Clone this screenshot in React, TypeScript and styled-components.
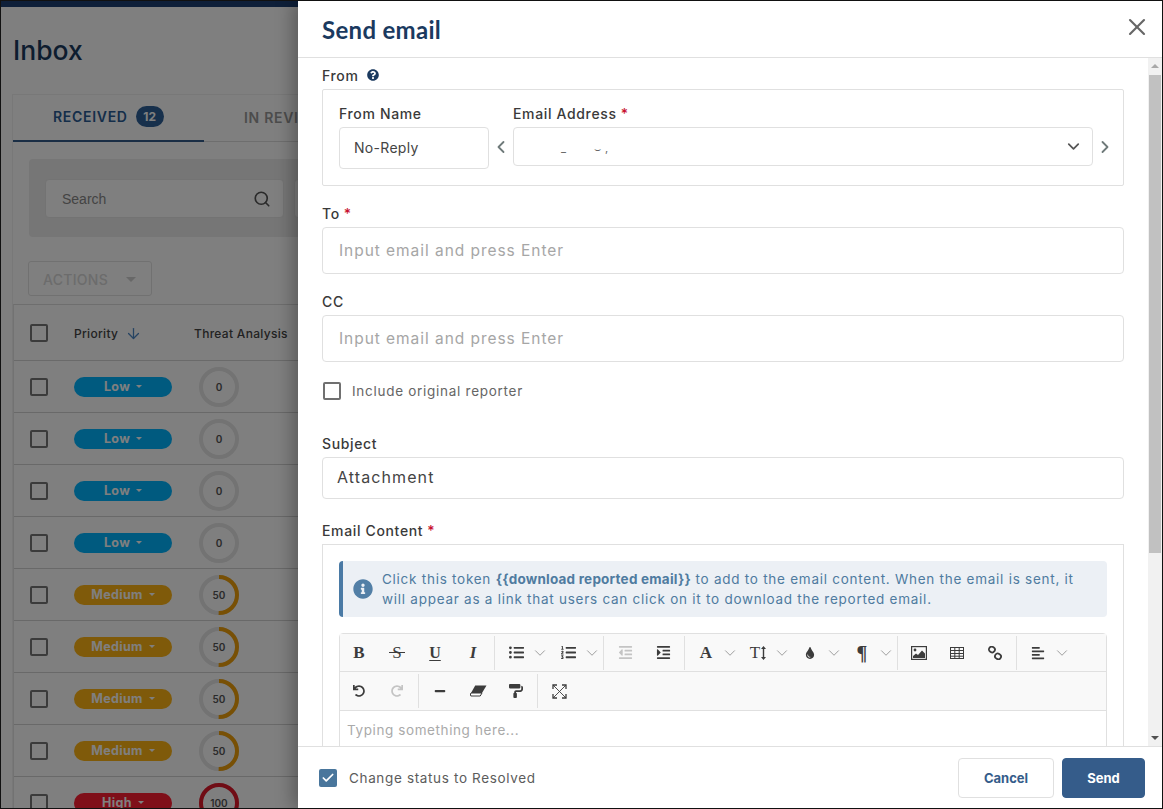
import React from 'react';
import styled, { createGlobalStyle } from 'styled-components';
import { ArrowDown, Check, ChevronDown, ChevronLeft, ChevronRight, Search, X } from 'lucide-react';
import {
  FaAlignLeft, FaIndent, FaInfoCircle, FaListOl, FaListUl, FaMinus, FaOutdent,
  FaPaintRoller, FaQuestionCircle, FaTint, FaUndo,
} from 'react-icons/fa';

const font = `Inter, "Liberation Sans", sans-serif`;
const serif = `"Liberation Serif", serif`;
const navy = '#1b3a5f';
const blue = '#355c8a';

const GlobalStyle = createGlobalStyle`
  html, body { margin: 0; padding: 0; background: #fff; }
  * { box-sizing: border-box; }
  body { font-family: ${font}; color: #333; }
`;

const Screen = styled.div`
  position: relative;
  width: 1163px;
  height: 809px;
  border: 1px solid #111;
  overflow: hidden;
  background: #fff;
`;

/* page behind the drawer */
const Page = styled.div`
  width: 1163px;
  display: flex;
  flex-direction: column;
`;

const TopBar = styled.div`
  height: 6px;
  background: #1d3f73;
`;

const PageBody = styled.div`
  padding: 26px 0 0 11px;
`;

const PageTitle = styled.h1`
  margin: 0 0 27px 1px;
  font-size: 26.5px;
  line-height: 34px;
  font-weight: 500;
  color: ${navy};
`;

const Card = styled.div`
  border: 1px solid #f0f0f0;
  border-right: 0;
  border-bottom: 0;
`;

const Tabs = styled.div`
  display: flex;
  height: 47px;
  border-bottom: 1px solid #ddd;
`;

const Tab = styled.div<{ $active?: boolean }>`
  width: 191px;
  height: 47px;
  display: flex;
  align-items: center;
  gap: 8px;
  padding: 0 0 2px 40px;
  font-size: 14px;
  font-weight: 600;
  letter-spacing: 0.7px;
  color: ${(p) => (p.$active ? '#2b5c94' : '#999')};
  border-bottom: ${(p) => (p.$active ? `2px solid ${blue}` : '0')};
`;

const TabBadge = styled.span`
  width: 28px;
  height: 21px;
  border-radius: 11px;
  background: #2f6199;
  color: #fff;
  font-size: 12px;
  font-weight: 700;
  letter-spacing: 0;
  display: flex;
  align-items: center;
  justify-content: center;
`;

const FilterBar = styled.div`
  display: flex;
  gap: 10px;
  margin: 17px 0 24px 16px;
  padding: 20px 16px 19px;
  background: #ececec;
  border-radius: 4px;
`;

const SearchBox = styled.div`
  width: 239px;
  height: 39px;
  background: #fff;
  border: 1px solid #e6e6e6;
  border-radius: 4px;
  display: flex;
  align-items: center;
  justify-content: space-between;
  padding: 0 12px 0 16px;
  font-family: "Liberation Sans", sans-serif;
  font-size: 14px;
  color: #888;
`;

const ActionsButton = styled.div`
  width: 124px;
  height: 35px;
  margin-left: 15px;
  border: 1px solid #e2e2e2;
  border-radius: 3px;
  display: flex;
  align-items: center;
  gap: 18px;
  padding: 1px 0 0 14px;
  font-size: 14px;
  font-weight: 500;
  letter-spacing: 0.3px;
  color: #d8d8d8;
`;

const Caret = styled.span<{ $size?: number; $color?: string }>`
  width: 0;
  height: 0;
  border-left: ${(p) => p.$size ?? 4}px solid transparent;
  border-right: ${(p) => p.$size ?? 4}px solid transparent;
  border-top: ${(p) => p.$size ?? 4}px solid ${(p) => p.$color ?? '#fff'};
`;

const Table = styled.div`
  margin-top: 8px;
  border-left: 1px solid #e4e4e4;
  border-top: 1px solid #dcdcdc;
`;

const HeaderRow = styled.div`
  height: 56px;
  display: flex;
  align-items: center;
  padding: 1px 0 0 16px;
  border-bottom: 1px solid #d4d4d4;
`;

const Row = styled.div`
  height: 52px;
  display: flex;
  align-items: center;
  padding-left: 16px;
  border-bottom: 1px solid #d2d2d2;
`;

const RowCheck = styled.span`
  width: 18px;
  height: 18px;
  flex: none;
  margin-right: 26px;
  border: 2px solid #777;
  border-radius: 2px;
`;

const HeaderCell = styled.div<{ $width: number }>`
  width: ${(p) => p.$width}px;
  flex: none;
  display: flex;
  align-items: center;
  gap: 7px;
  font-size: 12px;
  font-weight: 500;
  color: #444;
  letter-spacing: 0.3px;
`;

const levelColors = { Low: '#00b4ff', Medium: '#ffb414', High: '#ff1e32' };
type Level = keyof typeof levelColors;

const Pill = styled.span<{ $level: Level }>`
  width: 98px;
  height: 20px;
  flex: none;
  margin-right: 27px;
  border-radius: 10px;
  background: ${(p) => levelColors[p.$level]};
  color: #fff;
  font-size: 12.5px;
  font-weight: 700;
  letter-spacing: 0.35px;
  display: flex;
  align-items: center;
  justify-content: center;
  gap: 6px;
`;

const RingWrap = styled.div`
  width: 40px;
  height: 40px;
  display: grid;
  place-items: center;

  & > * {
    grid-area: 1 / 1;
  }
`;

const RingValue = styled.span`
  font-size: 10px;
  font-weight: 600;
  color: #555;
`;

const Ring = ({ value, color }: { value: number; color: string }) => {
  const circumference = 2 * Math.PI * 18;
  return (
    <RingWrap>
      <svg width="40" height="40" viewBox="0 0 40 40">
        <circle cx="20" cy="20" r="18" fill="none" stroke="#e6e6e6" strokeWidth="4" />
        {value > 0 && (
          <circle
            cx="20"
            cy="20"
            r="18"
            fill="none"
            stroke={color}
            strokeWidth="4"
            strokeDasharray={`${(circumference * value) / 100} ${circumference}`}
            transform="rotate(-90 20 20)"
          />
        )}
      </svg>
      <RingValue>{value}</RingValue>
    </RingWrap>
  );
};

const Overlay = styled.div`
  position: absolute;
  inset: 0;
  background: rgba(0, 0, 0, 0.5);
`;

/* drawer */
const Drawer = styled.div`
  position: absolute;
  top: 0;
  right: 0;
  bottom: 0;
  width: 864px;
  background: #fff;
  display: flex;
  flex-direction: column;
  box-shadow: -6px 0 16px rgba(0, 0, 0, 0.28);
`;

const DrawerHeader = styled.header`
  height: 57px;
  flex: none;
  display: flex;
  align-items: center;
  justify-content: space-between;
  padding: 0 11px 0 24px;
  border-bottom: 1px solid #e0e0e0;
`;

const DrawerTitle = styled.h2`
  margin: 0;
  font-family: Lato, sans-serif;
  font-size: 24px;
  font-weight: 700;
  letter-spacing: 0.3px;
  color: ${navy};
`;

const CloseIcon = styled(X)`
  margin-bottom: 4px;
`;

const DrawerMain = styled.div`
  flex: 1;
  min-height: 0;
  display: flex;
  overflow: hidden;
`;

const Form = styled.div`
  width: 802px;
  margin: 0 24px;
  padding-top: 9px;
  flex: none;
`;

const Label = styled.div<{ $top?: number }>`
  display: flex;
  align-items: center;
  gap: 3px;
  height: 18px;
  padding-bottom: 2px;
  margin-top: ${(p) => p.$top ?? 0}px;
  margin-bottom: 4px;
  font-size: 14px;
  font-weight: 500;
  letter-spacing: 0.65px;
  color: #3a3a3a;
  white-space: nowrap;
`;

const Required = styled.span`
  color: #c8102e;
  margin-left: 1px;
`;

const HelpIcon = styled(FaQuestionCircle)`
  margin-left: 5px;
  color: ${navy};
  font-size: 12px;
`;

const FromBox = styled.div`
  height: 97px;
  border: 1px solid #e0e0e0;
  border-radius: 2px;
  padding: 15px 0 0 16px;
  display: flex;
`;

const FieldColumn = styled.div<{ $width: number }>`
  width: ${(p) => p.$width}px;
  flex: none;
`;

const NavChevron = styled.div`
  width: 24px;
  flex: none;
  height: 39px;
  margin-top: 22px;
  display: flex;
  align-items: center;
  justify-content: center;
  color: #6f7a7a;
`;

const Field = styled.div<{ $height: number; $size?: number; $pad?: number; $spacing?: number; $lift?: boolean }>`
  height: ${(p) => p.$height}px;
  border: 1px solid #e0e0e0;
  border-radius: 4px;
  display: flex;
  align-items: center;
  justify-content: space-between;
  padding: 0 9px ${(p) => (p.$lift ? 2 : 0)}px ${(p) => p.$pad ?? 14}px;
  font-size: ${(p) => p.$size ?? 14}px;
  letter-spacing: ${(p) => p.$spacing ?? 0.3}px;
  color: #444;
`;

const Placeholder = styled.span`
  color: #a6a6a6;
  font-size: 15.5px;
  letter-spacing: 0.95px;
`;

const Redacted = styled.span`
  padding: 3px 0 0 33px;
  font-size: 11px;
  color: #666;
`;

const RedactedGap = styled.span`
  display: inline-block;
  width: 28px;
`;

const CheckRow = styled.label`
  display: flex;
  align-items: center;
  gap: 11px;
  margin: 20px 0 0 1px;
  font-size: 13.5px;
  letter-spacing: 0.72px;
  color: #666;
`;

const EmptyCheck = styled.span`
  width: 18px;
  height: 18px;
  border: 2px solid #707070;
  border-radius: 2px;
`;

const ContentBox = styled.div`
  border: 1px solid #e0e0e0;
  padding: 16px;
`;

const Notice = styled.div`
  height: 56px;
  display: flex;
  align-items: center;
  gap: 9px;
  padding-left: 10px;
  border-left: 4px solid #4a7aa5;
  border-radius: 4px;
  background: #ecf0f5;
  font-size: 13.5px;
  line-height: 20px;
  letter-spacing: 0.74px;
  color: #4f7ba0;
  white-space: nowrap;

  b {
    letter-spacing: 0.22px;
  }
`;

const NoticeIcon = styled(FaInfoCircle)`
  font-size: 20px;
  flex: none;
  color: #527fa6;
`;

const Editor = styled.div`
  margin-top: 16px;
  border: 1px solid #e0e0e0;
  border-radius: 4px 4px 0 0;
`;

const ToolbarRow = styled.div`
  height: 38px;
  display: flex;
  align-items: center;
  background: #f9f9f9;
  border-bottom: 1px solid #e0e0e0;

  & + & {
    height: 39px;
  }
`;

const ToolButton = styled.button<{ $dim?: boolean; $size?: number }>`
  width: 38px;
  height: 36px;
  flex: none;
  padding: 0;
  border: 0;
  background: none;
  display: flex;
  align-items: center;
  justify-content: center;
  font-family: ${serif};
  font-size: ${(p) => p.$size ?? 17}px;
  line-height: 1;
  color: ${(p) => (p.$dim ? '#c4c4c4' : '#3c3c3c')};
`;

const ToolMenu = styled.span`
  width: 10px;
  margin-right: 4px;
  flex: none;
  display: flex;
  align-items: center;
  justify-content: center;
  color: #8a8a8a;

  svg {
    flex: none;
  }
`;

const ToolSep = styled.span`
  width: 1px;
  height: 34px;
  flex: none;
  margin: 0 2px 0 2px;
  background: #e0e0e0;
`;

const EditorText = styled.div`
  min-height: 140px;
  padding: 11px 7px;
  font-size: 13.5px;
  letter-spacing: 0.6px;
  color: #aaa;
`;

const Strike = styled.span`
  position: relative;
  font-size: 17px;

  &::after {
    content: '';
    position: absolute;
    left: -3px;
    right: -3px;
    top: 8px;
    height: 1px;
    background: #3c3c3c;
  }
`;

const Under = styled.span`
  font-weight: 700;
  text-decoration: underline;
  text-underline-offset: 2px;
  font-size: 16px;
`;

const ScrollTrack = styled.div`
  width: 14px;
  flex: none;
  background: #f1f1f1;
  display: flex;
  flex-direction: column;
  align-items: center;
`;

const ScrollArrow = styled.div<{ $up?: boolean }>`
  height: 17px;
  flex: none;
  display: flex;
  align-items: center;
  justify-content: center;
  transform: ${(p) => (p.$up ? 'rotate(180deg)' : 'none')};
`;

const ScrollThumb = styled.div`
  width: 12px;
  height: 478px;
  background: #c1c1c1;
`;

const ScrollRest = styled.div`
  flex: 1;
`;

const Footer = styled.footer`
  height: 62px;
  flex: none;
  display: flex;
  align-items: center;
  justify-content: space-between;
  padding: 0 17px 0 21px;
  border-top: 1px solid #e0e0e0;
`;

const FooterCheck = styled.label`
  display: flex;
  align-items: center;
  gap: 12px;
  font-size: 13.5px;
  letter-spacing: 0.65px;
  color: #5c5c5c;
`;

const CheckedBox = styled.span`
  width: 18px;
  height: 18px;
  border-radius: 2px;
  background: #49769c;
  display: flex;
  align-items: center;
  justify-content: center;
  color: #fff;
`;

const FooterButtons = styled.div`
  display: flex;
  gap: 8px;
`;

const FooterButton = styled.button<{ $primary?: boolean }>`
  height: 40px;
  width: ${(p) => (p.$primary ? '83px' : '96px')};
  border-radius: 4px;
  border: 1px solid ${(p) => (p.$primary ? blue : '#e0e0e0')};
  background: ${(p) => (p.$primary ? blue : '#fff')};
  color: ${(p) => (p.$primary ? '#fff' : blue)};
  font-family: ${font};
  font-size: 13px;
  font-weight: 700;
`;

const TextT = styled.span`
  font-size: 17px;
  margin-right: 1px;
`;

const TextHeightIcon = () => (
  <>
    <TextT>T</TextT>
    <svg width="5" height="14" viewBox="0 0 5 14" fill="#3c3c3c">
      <path d="M2.5 0 5 3H3.2v8H5l-2.5 3L0 11h1.8V3H0z" />
    </svg>
  </>
);

const ImageIcon = () => (
  <svg width="16" height="14" viewBox="0 0 16 14">
    <rect x="0.6" y="0.6" width="14.8" height="12.8" fill="none" stroke="#3c3c3c" strokeWidth="1.2" />
    <circle cx="4" cy="4" r="1.4" fill="#3c3c3c" />
    <path d="M2 12V10l3-2.5 2 1.5 4-4.5 3 3V12z" fill="#3c3c3c" />
  </svg>
);

const TableIcon = () => (
  <svg width="14" height="12" viewBox="0 0 14 12" fill="none" stroke="#3c3c3c" strokeWidth="1">
    <rect x="0.5" y="0.5" width="13" height="11" />
    <path d="M0 3.5h14M0 6.5h14M0 9.2h14M4.8 0v12M9.2 0v12" />
  </svg>
);

const LinkIcon = () => (
  <svg width="14" height="14" viewBox="0 0 14 14" fill="none" stroke="#3c3c3c" strokeWidth="1.8">
    <rect x="0.9" y="0.9" width="6" height="5.4" rx="2.6" transform="rotate(35 4 3.6)" />
    <rect x="7" y="7.7" width="6" height="5.4" rx="2.6" transform="rotate(35 10 10.4)" />
  </svg>
);

const EraserIcon = () => (
  <svg width="17" height="12" viewBox="0 0 17 12">
    <path d="M5.2 .5H16.5L12 8H1z" fill="#3c3c3c" />
    <path d="M1 8h11l-1.8 3H.8L.4 9z" fill="#fff" stroke="#3c3c3c" strokeWidth="1" />
  </svg>
);

const ExpandIcon = () => (
  <svg width="15" height="15" viewBox="0 0 15 15" fill="none" stroke="#3c3c3c" strokeWidth="0.9">
    <path d="M1 1l13 13M14 1 1 14" />
    <path d="M1 5V1h4M10 1h4v4M14 10v4h-4M5 14H1v-4" strokeWidth="1.3" />
  </svg>
);

const levels: Level[] = ['Low', 'Low', 'Low', 'Low', 'Medium', 'Medium', 'Medium', 'Medium', 'High'];
const scores: Record<Level, number> = { Low: 0, Medium: 50, High: 100 };
const ringColors: Record<Level, string> = { Low: '#e6e6e6', Medium: '#f0a00a', High: '#e0182a' };

const smallChevron = <ChevronDown size={18} strokeWidth={1.1} />;

export default function App() {
  return (
    <Screen>
      <GlobalStyle />
      <Page>
        <TopBar />
        <PageBody>
          <PageTitle>Inbox</PageTitle>
          <Card>
            <Tabs>
              <Tab $active>
                RECEIVED <TabBadge>12</TabBadge>
              </Tab>
              <Tab>IN REVIEW</Tab>
            </Tabs>
            <FilterBar>
              <SearchBox>
                Search
                <Search size={18} color="#555" strokeWidth={2.2} />
              </SearchBox>
              <SearchBox />
            </FilterBar>
            <ActionsButton>
              ACTIONS <Caret $size={5} $color="#d0d0d0" />
            </ActionsButton>
            <Table>
              <HeaderRow>
                <RowCheck />
                <HeaderCell $width={120}>
                  Priority <ArrowDown size={17} color="#4a86c5" strokeWidth={1.8} />
                </HeaderCell>
                <HeaderCell $width={120}>Threat Analysis</HeaderCell>
              </HeaderRow>
              {levels.map((level, i) => (
                <Row key={i}>
                  <RowCheck />
                  <Pill $level={level}>
                    {level} <Caret $size={3} />
                  </Pill>
                  <Ring value={scores[level]} color={ringColors[level]} />
                </Row>
              ))}
            </Table>
          </Card>
        </PageBody>
      </Page>
      <Overlay />
      <Drawer>
        <DrawerHeader>
          <DrawerTitle>Send email</DrawerTitle>
          <CloseIcon size={28} color="#666" strokeWidth={1.8} />
        </DrawerHeader>
        <DrawerMain>
          <Form>
            <Label>
              From <HelpIcon />
            </Label>
            <FromBox>
              <FieldColumn $width={150}>
                <Label>From Name</Label>
                <Field $height={42} $pad={14} $lift>No-Reply</Field>
              </FieldColumn>
              <NavChevron>
                <ChevronLeft size={20} strokeWidth={2.2} />
              </NavChevron>
              <FieldColumn $width={580}>
                <Label>
                  Email Address <Required>*</Required>
                </Label>
                <Field $height={39}>
                  <Redacted>_<RedactedGap />⌣ ,</Redacted>
                  <ChevronDown size={19} color="#555" strokeWidth={2.2} />
                </Field>
              </FieldColumn>
              <NavChevron>
                <ChevronRight size={20} strokeWidth={2.2} />
              </NavChevron>
            </FromBox>

            <Label $top={19}>
              To <Required>*</Required>
            </Label>
            <Field $height={47} $pad={16}>
              <Placeholder>Input email and press Enter</Placeholder>
            </Field>

            <Label $top={19}>CC</Label>
            <Field $height={47} $pad={16}>
              <Placeholder>Input email and press Enter</Placeholder>
            </Field>

            <CheckRow>
              <EmptyCheck />
              Include original reporter
            </CheckRow>

            <Label $top={35}>Subject</Label>
            <Field $height={42} $size={16} $spacing={1.1} $lift>Attachment</Field>

            <Label $top={23}>
              Email Content <Required>*</Required>
            </Label>
            <ContentBox>
              <Notice>
                <NoticeIcon />
                <span>
                  Click this token <b>{'{{download reported email}}'}</b> to add to the email content. When the email is sent, it
                  <br />
                  will appear as a link that users can click on it to download the reported email.
                </span>
              </Notice>
              <Editor>
                <ToolbarRow>
                  <ToolButton><b>B</b></ToolButton>
                  <ToolButton><Strike>S</Strike></ToolButton>
                  <ToolButton><Under>U</Under></ToolButton>
                  <ToolButton><b><i>I</i></b></ToolButton>
                  <ToolSep />
                  <ToolButton><FaListUl size={15} /></ToolButton>
                  <ToolMenu>{smallChevron}</ToolMenu>
                  <ToolButton><FaListOl size={15} /></ToolButton>
                  <ToolMenu>{smallChevron}</ToolMenu>
                  <ToolSep />
                  <ToolButton $dim><FaOutdent size={15} /></ToolButton>
                  <ToolButton><FaIndent size={15} /></ToolButton>
                  <ToolSep />
                  <ToolButton><b>A</b></ToolButton>
                  <ToolMenu>{smallChevron}</ToolMenu>
                  <ToolButton><TextHeightIcon /></ToolButton>
                  <ToolMenu>{smallChevron}</ToolMenu>
                  <ToolButton><FaTint size={12} /></ToolButton>
                  <ToolMenu>{smallChevron}</ToolMenu>
                  <ToolButton $size={20}><b>¶</b></ToolButton>
                  <ToolMenu>{smallChevron}</ToolMenu>
                  <ToolSep />
                  <ToolButton><ImageIcon /></ToolButton>
                  <ToolButton><TableIcon /></ToolButton>
                  <ToolButton><LinkIcon /></ToolButton>
                  <ToolSep />
                  <ToolButton><FaAlignLeft size={14} /></ToolButton>
                  <ToolMenu>{smallChevron}</ToolMenu>
                </ToolbarRow>
                <ToolbarRow>
                  <ToolButton><FaUndo size={12} /></ToolButton>
                  <ToolButton $dim><FaUndo size={12} style={{ transform: 'scaleX(-1)' }} /></ToolButton>
                  <ToolSep />
                  <ToolButton><FaMinus size={12} /></ToolButton>
                  <ToolButton><EraserIcon /></ToolButton>
                  <ToolButton><FaPaintRoller size={14} /></ToolButton>
                  <ToolSep />
                  <ToolButton><ExpandIcon /></ToolButton>
                </ToolbarRow>
                <EditorText>Typing something here...</EditorText>
              </Editor>
            </ContentBox>
          </Form>
          <ScrollTrack>
            <ScrollArrow $up><Caret $size={4} $color="#a8a8a8" /></ScrollArrow>
            <ScrollThumb />
            <ScrollRest />
            <ScrollArrow><Caret $size={4} $color="#505050" /></ScrollArrow>
          </ScrollTrack>
        </DrawerMain>
        <Footer>
          <FooterCheck>
            <CheckedBox><Check size={14} strokeWidth={3} /></CheckedBox>
            Change status to Resolved
          </FooterCheck>
          <FooterButtons>
            <FooterButton>Cancel</FooterButton>
            <FooterButton $primary>Send</FooterButton>
          </FooterButtons>
        </Footer>
      </Drawer>
    </Screen>
  );
}
